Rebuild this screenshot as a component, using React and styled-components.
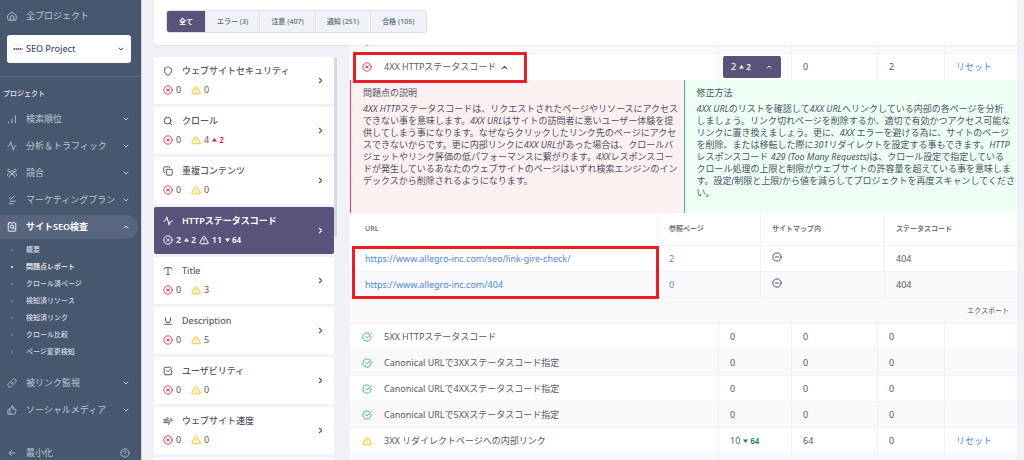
import React from 'react';
import styled, { createGlobalStyle } from 'styled-components';
import {
  Activity,
  ArrowLeft,
  ChevronDown,
  ChevronRight,
  ChevronUp,
  CircleCheckBig,
  CircleMinus,
  CircleQuestionMark,
  CircleX,
  Copy,
  Link,
  Search,
  Shield,
  SquareCheckBig,
  ThumbsUp,
  TriangleAlert,
  Type,
  Underline,
  Wind,
} from 'lucide-react';

const GlobalStyle = createGlobalStyle`
  * {
    box-sizing: border-box;
  }
  body {
    margin: 0;
    background: #f1f2f8;
    color: #555962;
    font-family: 'Noto Sans', 'Noto Sans CJK JP', sans-serif;
    font-size: 9px;
    line-height: 12px;
  }
  button, select {
    font: inherit;
    color: inherit;
  }
  a {
    color: #5087d6;
    text-decoration: none;
  }
`;
const Page = styled.div`
  display: flex;
  height: 100vh;
  overflow: hidden;
`;

/* sidebar */
const Sidebar = styled.nav`
  display: flex;
  flex-direction: column;
  flex: 0 0 142px;
  min-width: 0;
  padding-top: 4px;
  background: #47576f;
  border-right: 1px solid #d5d9e6;
`;
const NavLink = styled.a`
  display: flex;
  align-items: center;
  flex: none;
  height: ${(props) => (props.$compact ? '14px' : '24px')};
  padding: 0 8px 0 7px;
  margin: 0 3px ${(props) => (props.$active || props.$compact ? '0' : '3px')} 0;
  border-radius: 0 12px 12px 0;
  white-space: nowrap;
  color: ${(props) => (props.$active ? '#ffffff' : '#bcc8d4')};
  background: ${(props) => (props.$active ? '#57667e' : 'transparent')};
  font-weight: ${(props) => (props.$active ? 600 : 400)};
  svg {
    flex: none;
  }
`;
const NavText = styled.span`
  flex: 1;
  min-width: 0;
  margin-left: 9px;
`;
const ProjectPicker = styled.div`
  display: flex;
  align-items: center;
  flex: none;
  gap: 3px;
  height: 28px;
  margin: 4px 10px 13px 7px;
  padding: 0 6px;
  background: #ffffff;
  border-radius: 3px;
  color: #4a4a78;
`;
const PickerSelect = styled.select`
  flex: 1;
  min-width: 0;
  padding: 0;
  appearance: none;
  border: 0;
  background: transparent;
  font-weight: 500;
`;
const NavTitle = styled.h2`
  margin: 0 0 7px;
  padding: 11px 0 0 3px;
  border-top: 1px solid #5a6880;
  font-size: 7px;
  font-weight: 500;
  line-height: 12px;
  color: #e2e7ee;
`;
const SubList = styled.ul`
  margin: 2px 0 11px;
  padding: 0;
  list-style: none;
`;
const SubItem = styled.li`
  display: flex;
  align-items: center;
  height: 17px;
  padding-left: 11px;
  &::before {
    content: '';
    width: 2px;
    height: 2px;
    margin-right: 13px;
    border-radius: 1px;
    background: ${(props) => (props.$active ? '#ffffff' : '#76869b')};
  }
  a {
    font-size: 7px;
    font-weight: 500;
    color: ${(props) => (props.$active ? '#ffffff' : '#d3dbe4')};
  }
`;
const NavFooter = styled.div`
  margin-top: auto;
`;

/* main area */
const Main = styled.main`
  display: flex;
  flex-direction: column;
  flex: 1;
  min-width: 0;
  padding: 0 7px 0 12px;
`;
const TopCard = styled.header`
  position: relative;
  z-index: 1;
  flex: none;
  padding: 10px 12px 12px;
  background: #ffffff;
  border-radius: 0 0 3px 3px;
  box-shadow: 0 1px 2px rgba(60, 70, 110, 0.08);
`;
const Tabs = styled.div`
  display: inline-flex;
  height: 23px;
  border: 1px solid #dddfea;
  border-radius: 3px;
  background: #f1f2f8;
  overflow: hidden;
  vertical-align: top;
`;
const Tab = styled.button`
  min-width: 38px;
  padding: 0 11px;
  border: 0;
  font-size: 7px;
  font-weight: 600;
  white-space: nowrap;
  color: ${(props) => (props.$active ? '#ffffff' : '#6b7d8a')};
  background: ${(props) => (props.$active ? '#59527a' : 'transparent')};
  & + & {
    border-left: 1px solid #e1e3ed;
  }
`;
const Columns = styled.div`
  display: flex;
  flex: 1;
  min-height: 0;
  gap: 13px;
`;
const CategoryList = styled.div`
  display: flex;
  flex-direction: column;
  flex: 0 0 183px;
  gap: 3px;
  padding-right: 3px;
  margin-top: 12px;
  position: relative;
  overflow: hidden;
`;
const ScrollThumb = styled.div`
  position: absolute;
  top: 0;
  right: 0;
  width: 3px;
  height: 180px;
  border-radius: 2px;
  background: #d5d8e5;
`;
const Category = styled.button`
  display: flex;
  align-items: center;
  flex: 0 0 47px;
  padding: 0 9px;
  border: 0;
  border-radius: 2px;
  text-align: left;
  color: ${(props) => (props.$active ? '#ffffff' : '#555962')};
  background: ${(props) => (props.$active ? '#59527a' : '#ffffff')};
  font-weight: ${(props) => (props.$active ? 600 : 400)};
`;
const CategoryBody = styled.span`
  flex: 1;
`;
const CategoryName = styled.span`
  display: flex;
  align-items: center;
  gap: 9px;
  height: 12px;
  margin-bottom: 7px;
  font-weight: ${(props) => (props.$active ? 600 : 500)};
`;
const Counts = styled.span`
  display: flex;
  align-items: center;
  height: 12px;
  gap: 3px;
`;
const Count = styled.span`
  display: inline-flex;
  align-items: center;
  gap: 3px;
  min-width: 25px;
`;
const Trend = styled.span`
  display: inline-flex;
  align-items: center;
  gap: 2px;
  font-size: 8px;
  font-weight: 600;
  color: ${(props) => props.$color || 'inherit'};
`;

/* issues */
const Issues = styled.section`
  flex: 1;
  min-width: 0;
  overflow: hidden;
`;
const IssueTable = styled.table`
  width: 100%;
  margin-top: -17px;
  border-collapse: separate;
  border-spacing: 0;
  table-layout: fixed;
  background: #ffffff;
`;
const IssueRow = styled.tr`
  background: ${(props) => (props.$striped ? '#f9f9fc' : '#ffffff')};
`;
const IssueCell = styled.td`
  height: 26px;
  padding: 0 12px;
  white-space: nowrap;
  border-bottom: ${(props) => (props.$open ? '0' : '1px solid #f1f2f8')};
  & + & {
    padding: 0 11px;
    border-left: 1px solid #f1f2f8;
  }
`;
const CountValue = styled.div`
  display: flex;
  align-items: center;
  gap: 3px;
`;
const IssueName = styled.div`
  display: flex;
  align-items: center;
  gap: 12px;
  position: relative;
`;
const ToggleButton = styled.button`
  display: flex;
  align-items: center;
  gap: 4px;
  padding: 0;
  border: 0;
  background: transparent;
`;
const CountButton = styled.button`
  display: flex;
  align-items: center;
  justify-content: space-between;
  width: 58px;
  height: 22px;
  margin-left: -7px;
  padding: 0 8px;
  border: 0;
  border-radius: 2px;
  color: #ffffff;
  background: #59527a;
  font-weight: 500;
`;
const PlainCell = styled.td`
  padding: 0;
`;
const Notes = styled.div`
  display: grid;
  grid-template-columns: 1fr 1fr;
  height: 133px;
`;
const Note = styled.article`
  min-width: 0;
  padding: 7px 0 0 12px;
  border-left: 1px solid ${(props) => props.$accent};
  background: ${(props) => props.$tint};
  color: #4c5263;
  white-space: nowrap;
  h3 {
    margin: 0 0 4px;
    font-size: 9px;
    font-weight: 400;
    line-height: 12px;
  }
  p {
    margin: 0;
  }
`;
const UrlTable = styled.table`
  width: 100%;
  border-collapse: separate;
  border-spacing: 0;
  table-layout: fixed;
  th:first-child,
  td:first-child {
    padding-left: 15px;
  }
`;
const HeadCell = styled.th`
  height: 33px;
  padding: 0 11px;
  font-size: 7px;
  font-weight: 600;
  text-align: left;
  color: #6b7480;
  border-bottom: 1px solid #f1f2f8;
  & + & {
    border-left: 1px solid #f1f2f8;
  }
`;
const ExportBar = styled.div`
  display: flex;
  align-items: center;
  justify-content: flex-end;
  height: 26px;
  padding-right: 8px;
  background: #f9f9fc;
  border-bottom: 1px solid #f1f2f8;
  button {
    padding: 0;
    border: 0;
    background: transparent;
    font-size: 7px;
  }
`;
const Anchor = styled.div`
  position: relative;
`;
const Highlight = styled.div`
  position: absolute;
  top: ${(props) => props.$top};
  left: ${(props) => props.$left};
  width: ${(props) => props.$width};
  height: ${(props) => props.$height};
  border: 3px solid #ea1c24;
  pointer-events: none;
`;

const NavSvg = styled.svg.attrs({
  width: 10,
  height: 10,
  viewBox: '0 0 24 24',
  fill: 'none',
  stroke: 'currentColor',
  strokeWidth: 2.2,
  strokeLinecap: 'round',
  strokeLinejoin: 'round',
})``;
const Home = () => (
  <NavSvg>
    <path d="M2 10.5L12 2l10 8.5V20a2 2 0 0 1-2 2H4a2 2 0 0 1-2-2z" />
    <path d="M8 22v-7a4 4 0 0 1 8 0v7" />
  </NavSvg>
);
const Bars = () => (
  <NavSvg>
    <path d="M4 19v2M12 12v9M20 4v17" />
  </NavSvg>
);
const People = () => (
  <NavSvg>
    <circle cx="12" cy="10" r="3.5" />
    <path d="M5 22c0-4 3-6.500 7-6.500s7 2.500 7 6.500" />
    <path d="M7 8a3 3 0 1 1-1-5M17 8a3 3 0 1 0 1-5M1 18c0-3 1.500-5 4-6M23 18c0-3-1.500-5-4-6" />
  </NavSvg>
);
const PageSearch = () => (
  <NavSvg>
    <rect x="3" y="2" width="18" height="20" rx="2" />
    <circle cx="12" cy="11" r="4" />
    <path d="M15 14l2 3" />
  </NavSvg>
);
const CheckLines = () => (
  <NavSvg>
    <path d="M5 6l4 4 9-8M8 15h12M5 21h10" />
  </NavSvg>
);
const SiteLogo = () => (
  <svg width="10" height="10" viewBox="0 0 20 20">
    <path d="M0 2h20M0 18h20" stroke="#f3dede" strokeWidth="2" />
    <path d="M1 10h18" stroke="#6e6e72" strokeWidth="4" strokeDasharray="3 1" />
  </svg>
);
const Arrow = ({ down }) => (
  <svg width="5" height="4" viewBox="0 0 10 8">
    <path d={down ? 'M0 1h10L5 8z' : 'M0 7h10L5 0z'} fill="currentColor" />
  </svg>
);

const topNav = [
  { name: '検索順位', icon: <Bars /> },
  { name: '分析＆トラフィック', icon: <Activity size={10} /> },
  { name: '競合', icon: <People /> },
  { name: 'マーケティングプラン', icon: <CheckLines /> },
];
const subNav = [
  '概要',
  '問題点レポート',
  'クロール済ページ',
  '検知済リソース',
  '検知済リンク',
  'クロール比較',
  'ページ変更検知',
];
const tabs = ['全て', 'エラー (3)', '注意 (407)', '通知 (251)', '合格 (105)'];
const categories = [
  { name: 'ウェブサイトセキュリティ', Icon: Shield, errors: 0, warnings: 0 },
  { name: 'クロール', Icon: Search, errors: 0, warnings: 4, up: 2 },
  { name: '重複コンテンツ', Icon: Copy, errors: 0, warnings: 0 },
  { name: 'HTTPステータスコード', Icon: Activity, errors: 2, errorsUp: 2, warnings: 11, down: 64, active: true },
  { name: 'Title', Icon: Type, errors: 0, warnings: 3 },
  { name: 'Description', Icon: Underline, errors: 0, warnings: 5 },
  { name: 'ユーザビリティ', Icon: SquareCheckBig, errors: 0, warnings: 0 },
  { name: 'ウェブサイト速度', Icon: Wind, errors: 0, warnings: 0 },
];
const passed = [
  '5XX HTTPステータスコード',
  'Canonical URLで3XXステータスコード指定',
  'Canonical URLで4XXステータスコード指定',
  'Canonical URLで5XXステータスコード指定',
];
const urls = [
  { url: 'https://www.allegro-inc.com/seo/link-gire-check/', pages: 2 },
  { url: 'https://www.allegro-inc.com/404', pages: 0 },
];

const NavGroup = ({ name, icon, active }) => (
  <NavLink href="#" $active={active}>
    {icon}
    <NavText>{name}</NavText>
    {active ? <ChevronUp size={8} strokeWidth={3} /> : <ChevronDown size={8} strokeWidth={3} />}
  </NavLink>
);

const CategoryItem = ({ data }) => (
  <Category $active={data.active}>
    <CategoryBody>
      <CategoryName $active={data.active}>
        <data.Icon size={10} strokeWidth={2.4} />
        {data.name}
      </CategoryName>
      <Counts>
        <Count>
          <CircleX size={10} strokeWidth={2.4} color={data.active ? '#ffffff' : '#e5404f'} />
          {data.errors}
          {data.errorsUp && (
            <Trend>
              <Arrow />
              {data.errorsUp}
            </Trend>
          )}
        </Count>
        <Count>
          <TriangleAlert size={10} strokeWidth={2.4} color={data.active ? '#ffffff' : '#fcc21b'} />
          {data.warnings}
          {data.up && (
            <Trend $color="#e01b2c">
              <Arrow />
              {data.up}
            </Trend>
          )}
          {data.down && (
            <Trend>
              <Arrow down />
              {data.down}
            </Trend>
          )}
        </Count>
      </Counts>
    </CategoryBody>
    <ChevronRight size={9} strokeWidth={3} />
  </Category>
);

const App = () => (
  <Page>
    <GlobalStyle />
    <Sidebar>
      <NavLink href="#">
        <Home />
        <NavText>全プロジェクト</NavText>
      </NavLink>
      <ProjectPicker>
        <SiteLogo />
        <PickerSelect aria-label="プロジェクト">
          <option>SEO Project</option>
        </PickerSelect>
        <ChevronDown size={8} strokeWidth={3} />
      </ProjectPicker>
      <NavTitle>プロジェクト</NavTitle>
      {topNav.map((item) => (
        <NavGroup key={item.name} name={item.name} icon={item.icon} />
      ))}
      <NavGroup name="サイトSEO検査" icon={<PageSearch />} active />
      <SubList>
        {subNav.map((name) => (
          <SubItem key={name} $active={name === '問題点レポート'}>
            <a href="#">{name}</a>
          </SubItem>
        ))}
      </SubList>
      <NavGroup name="被リンク監視" icon={<Link size={10} />} />
      <NavGroup name="ソーシャルメディア" icon={<ThumbsUp size={10} />} />
      <NavFooter>
        <NavLink href="#" $compact>
          <ArrowLeft size={10} />
          <NavText>最小化</NavText>
          <CircleQuestionMark size={10} />
        </NavLink>
      </NavFooter>
    </Sidebar>
    <Main>
      <TopCard>
        <Tabs>
          {tabs.map((name, index) => (
            <Tab key={name} $active={index === 0}>
              {name}
            </Tab>
          ))}
        </Tabs>
      </TopCard>
      <Columns>
        <CategoryList>
          {categories.map((item) => (
            <CategoryItem key={item.name} data={item} />
          ))}
          <Category as="div" />
          <ScrollThumb />
        </CategoryList>
        <Issues>
          <IssueTable>
            <colgroup>
              <col />
              <col width="73" />
              <col width="86" />
              <col width="67" />
              <col width="73" />
            </colgroup>
            <tbody>
              <IssueRow $striped>
                <IssueCell>
                  <IssueName>
                    <CircleCheckBig size={10} color="#5087d6" />
                    3XX HTTPステータスコード
                  </IssueName>
                </IssueCell>
                <IssueCell>11</IssueCell>
                <IssueCell>33</IssueCell>
                <IssueCell />
                <IssueCell>
                  <a href="#">リセット</a>
                </IssueCell>
              </IssueRow>
              <IssueRow>
                <IssueCell $open>
                  <IssueName>
                    <CircleX size={10} strokeWidth={2.4} color="#e5404f" />
                    <ToggleButton>
                      4XX HTTPステータスコード
                      <ChevronUp size={9} strokeWidth={3} />
                    </ToggleButton>
                    <Highlight $top="-9px" $left="-9px" $width="174px" $height="31px" />
                  </IssueName>
                </IssueCell>
                <IssueCell $open>
                  <CountButton>
                    <CountValue>
                      2
                      <Trend>
                        <Arrow />2
                      </Trend>
                    </CountValue>
                    <ChevronUp size={8} strokeWidth={3} />
                  </CountButton>
                </IssueCell>
                <IssueCell $open>0</IssueCell>
                <IssueCell $open>2</IssueCell>
                <IssueCell $open>
                  <a href="#">リセット</a>
                </IssueCell>
              </IssueRow>
              <tr>
                <PlainCell colSpan={5}>
                  <Notes>
                    <Note $accent="#e5404f" $tint="#fdf0f1">
                      <h3>問題点の説明</h3>
                      <p>
                        <em>4XX HTTP</em>ステータスコードは、リクエストされたページやリソースにアクセス
                        <br />
                        できない事を意味します。<em>4XX URL</em>はサイトの訪問者に悪いユーザー体験を提
                        <br />
                        供してしまう事になります。なぜならクリックしたリンク先のページにアクセ
                        <br />
                        スできないからです。更に内部リンクに<em>4XX URL</em>があった場合は、クロールバ
                        <br />
                        ジェットやリンク評価の低パフォーマンスに繋がります。<em>4XX</em>レスポンスコー
                        <br />
                        ドが発生しているあなたのウェブサイトのページはいずれ検索エンジンのイン
                        <br />
                        デックスから削除されるようになります。
                      </p>
                    </Note>
                    <Note $accent="#3fb886" $tint="#edfff4">
                      <h3>修正方法</h3>
                      <p>
                        <em>4XX URL</em>のリストを確認して<em>4XX URL</em>へリンクしている内部の各ページを分析
                        <br />
                        しましょう。リンク切れページを削除するか、適切で有効かつアクセス可能な
                        <br />
                        リンクに置き換えましょう。更に、<em>4XX</em> エラーを避ける為に、サイトのページ
                        <br />
                        を削除、または移転した際に<em>301</em>リダイレクトを設定する事もできます。<em>HTTP</em>
                        <br />
                        レスポンスコード <em>429 (Too Many Requests)</em>は、クロール設定で指定している
                        <br />
                        クロール処理の上限と制限がウェブサイトの許容量を超えている事を意味しま
                        <br />
                        す。設定<em>(</em>制限と上限<em>)</em>から値を減らしてプロジェクトを再度スキャンしてくださ
                        <br />
                        い。
                      </p>
                    </Note>
                  </Notes>
                  <Anchor>
                    <UrlTable>
                      <colgroup>
                        <col />
                        <col width="103" />
                        <col width="124" />
                        <col width="133" />
                      </colgroup>
                      <thead>
                        <tr>
                          <HeadCell>URL</HeadCell>
                          <HeadCell>参照ページ</HeadCell>
                          <HeadCell>サイトマップ内</HeadCell>
                          <HeadCell>ステータスコード</HeadCell>
                        </tr>
                      </thead>
                      <tbody>
                        {urls.map((row, index) => (
                          <IssueRow key={row.url} $striped={index === 1}>
                            <IssueCell>
                              <a href="#">{row.url}</a>
                            </IssueCell>
                            <IssueCell>
                              <a href="#">{row.pages}</a>
                            </IssueCell>
                            <IssueCell>
                              <CircleMinus size={10} strokeWidth={2.4} color="#59527a" />
                            </IssueCell>
                            <IssueCell>404</IssueCell>
                          </IssueRow>
                        ))}
                      </tbody>
                    </UrlTable>
                    <Highlight $top="33px" $left="2px" $width="307px" $height="53px" />
                  </Anchor>
                  <ExportBar>
                    <button type="button">エクスポート</button>
                  </ExportBar>
                </PlainCell>
              </tr>
              {passed.map((name, index) => (
                <IssueRow key={name} $striped={index % 2 === 1}>
                  <IssueCell>
                    <IssueName>
                      <CircleCheckBig size={10} strokeWidth={2.4} color="#3fb886" />
                      {name}
                    </IssueName>
                  </IssueCell>
                  <IssueCell>0</IssueCell>
                  <IssueCell>0</IssueCell>
                  <IssueCell>0</IssueCell>
                  <IssueCell />
                </IssueRow>
              ))}
              <IssueRow>
                <IssueCell>
                  <IssueName>
                    <TriangleAlert size={10} strokeWidth={2.4} color="#fcc21b" />
                    3XX リダイレクトページへの内部リンク
                  </IssueName>
                </IssueCell>
                <IssueCell>
                  <CountValue>
                    10
                    <Trend $color="#1b7f4d">
                      <Arrow down />
                      64
                    </Trend>
                  </CountValue>
                </IssueCell>
                <IssueCell>64</IssueCell>
                <IssueCell>0</IssueCell>
                <IssueCell>
                  <a href="#">リセット</a>
                </IssueCell>
              </IssueRow>
              <IssueRow $striped>
                <IssueCell />
                <IssueCell />
                <IssueCell />
                <IssueCell />
                <IssueCell />
              </IssueRow>
            </tbody>
          </IssueTable>
        </Issues>
      </Columns>
    </Main>
  </Page>
);
export default App;
